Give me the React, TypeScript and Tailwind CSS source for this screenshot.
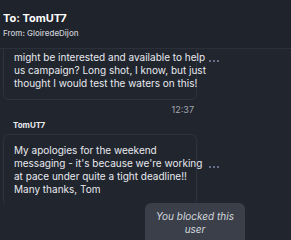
import React from "react";

const font = { fontFamily: "Inter, 'Noto Sans', sans-serif" };

function Dots() {
  return (
    <div className="flex gap-[2px] ml-[12px] mt-[32px] self-start">
      <span className="w-[2px] h-[2px] rounded-full bg-[#7d89a8]" />
      <span className="w-[2px] h-[2px] rounded-full bg-[#7d89a8]" />
      <span className="w-[2px] h-[2px] rounded-full bg-[#7d89a8]" />
    </div>
  );
}

function Bubble({ lines, className = "" }: { lines: string[]; className?: string }) {
  return (
    <div
      className={
        "w-[194px] rounded-[6px] border border-[#2e333e] px-[10px] pb-[9px] text-[10px] leading-[13px] text-[#e8eaee] " +
        className
      }
    >
      {lines.map((l, i) => (
        <div key={i} className="whitespace-nowrap">
          {l}
        </div>
      ))}
    </div>
  );
}

export default function App() {
  return (
    <div style={font} className="w-[291px] h-[240px] overflow-hidden bg-[#21252e] flex flex-col">
      {/* header */}
      <div className="relative z-10 h-[49px] shrink-0 bg-[#1f232b] border-b border-[#2b303a] pl-[3px] pt-[12px]">
        <div className="text-[11px] leading-[13px] font-bold text-white">To: TomUT7</div>
        <div className="mt-[3px] text-[8px] leading-[11px] font-medium text-[#c9ccd3]">From: GloiredeDijon</div>
      </div>

      {/* messages */}
      <div className="flex flex-col pl-[3px]">
        <div className="flex -mt-[21px]">
          <Bubble
            className="pt-[22px]"
            lines={[
              "might be interested and available to help",
              "us campaign? Long shot, I know, but just",
              "thought I would test the waters on this!",
            ]}
          />
          <Dots />
        </div>
        <div className="w-[194px] mt-[4px] pr-[3px] text-right text-[9px] leading-[12px] text-[#a3a8b3]">12:37</div>
        <div className="mt-[3px] pl-[10px] text-[8px] leading-[12px] font-bold text-[#e8eaee]">TomUT7</div>
        <div className="flex mt-[3px]">
          <Bubble
            className="pt-[9px] border-b-transparent"
            lines={[
              "My apologies for the weekend",
              "messaging - it's because we're working",
              "at pace under quite a tight deadline!!",
              "Many thanks, Tom",
            ]}
          />
          <Dots />
        </div>
        <div className="-mt-[3px] ml-[142px] w-[100px] rounded-[6px] bg-[#3a3f4a] pt-[7px] pb-[10px] text-center text-[10px] leading-[13px] italic text-[#d4d7dd]">
          You blocked this
          <br />
          user
        </div>
      </div>
    </div>
  );
}
